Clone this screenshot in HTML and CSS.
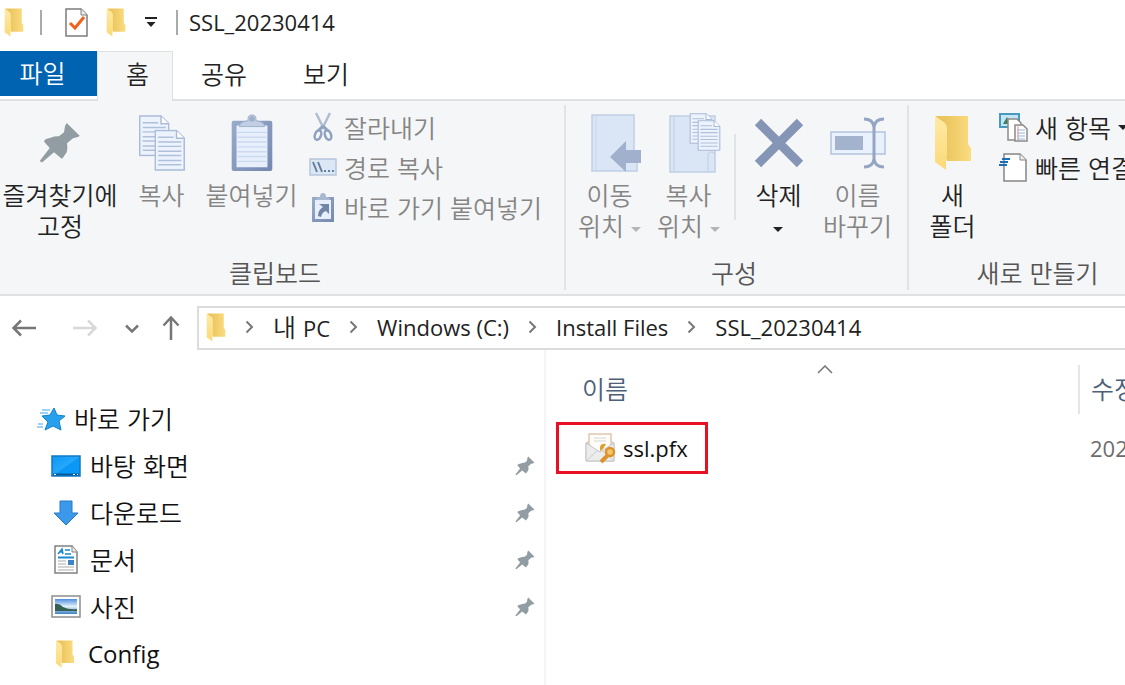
FILE: index.html
```html
<!DOCTYPE html>
<html lang="ko">
<head>
    <meta charset="UTF-8">
    <meta name="viewport" content="width=device-width, initial-scale=1.0">
    <title>SSL_20230414</title>
    <link rel="stylesheet" href="styles.css">
</head>
<body>

<!-- shared icons -->
<svg class="defs" aria-hidden="true">
    <defs>
        <linearGradient id="folderBack" x1="0" y1="0" x2="1" y2="0"><stop offset="0.2" stop-color="#eac45c"/><stop offset="1" stop-color="#fbdc80"/></linearGradient>
        <linearGradient id="folderFront" x1="0" y1="0" x2="0" y2="1"><stop offset="0" stop-color="#ffeaa6"/><stop offset="1" stop-color="#fbd976"/></linearGradient>
        <linearGradient id="board" x1="0" y1="0" x2="1" y2="1"><stop offset="0" stop-color="#9aaccb"/><stop offset="1" stop-color="#7488b0"/></linearGradient>
        <linearGradient id="desk" x1="0" y1="0" x2="1" y2="1"><stop offset="0" stop-color="#0a97f5"/><stop offset="0.5" stop-color="#25a8fb"/><stop offset="0.52" stop-color="#0a97f5"/><stop offset="1" stop-color="#0c9bf8"/></linearGradient>
        <linearGradient id="sky" x1="0" y1="0" x2="0" y2="1"><stop offset="0" stop-color="#4f8fe0"/><stop offset="0.5" stop-color="#e2f1fb"/><stop offset="1" stop-color="#3d7fc4"/></linearGradient>
    </defs>
    <symbol id="folder" viewBox="0 0 38 56">
        <path d="M2 1h32v28l3 4v13H13z" fill="url(#folderBack)"/>
        <path d="M1 1l10 7q2 2 2 5v28l-1 1v13L1 47z" fill="url(#folderFront)"/>
    </symbol>
    <symbol id="pin" viewBox="0 0 42 42">
        <path fill="#929da3" d="M27.7 1L40.7 13.7L39 15L34 16.3L28 21.3Q29 27 27.7 30.3L23 37L15 30.3L3 40.5L.7 39L10.7 26L5 19.5Q5 17 11.7 15.7Q16 14 20 14.3L25 10.3L26 4z"/>
    </symbol>
    <symbol id="chevron" viewBox="0 0 9 14"><path d="M1.5 1.5L7 7l-5.500 5.500" fill="none" stroke="#777" stroke-width="2"/></symbol>
    <symbol id="page" viewBox="0 0 32 43">
        <path d="M1 1h22l8 8v33H1z" fill="#edf3fc" stroke="#aabbd8" stroke-width="1.500"/>
        <path d="M23 1v8h8" fill="#fff" stroke="#aabbd8" stroke-width="1.500"/>
        <path d="M4 8h16M4 13h24M4 17.500h24M4 22.500h24M4 27h24M4 32h24M4 36.500h24" stroke="#b0c0dc" stroke-width="1.500"/>
    </symbol>
</svg>

<header class="titlebar">
    <svg class="ic-folder"><use href="#folder"/></svg>
    <span class="divider"></span>
    <button class="quick" aria-label="속성">
        <svg width="23" height="29" viewBox="0 0 23 29"><path d="M1 1h15l6 6v21H1z" fill="#fff" stroke="#7c7c7c" stroke-width="1.500"/><path d="M16 1v6h6" fill="#eee" stroke="#7c7c7c"/><path d="M5 15l5 5 9-11" fill="none" stroke="#f2601c" stroke-width="3"/></svg>
    </button>
    <button class="quick quick-folder" aria-label="새 폴더"><svg class="ic-folder"><use href="#folder"/></svg></button>
    <button class="quick quick-menu" aria-label="사용자 지정">
        <svg width="12" height="11" viewBox="0 0 12 11"><path d="M0 1h12" stroke="#222" stroke-width="2"/><path d="M1.500 5h9L6 10z" fill="#222"/></svg>
    </button>
    <span class="divider"></span>
    <h1 class="title latin">SSL_20230414</h1>
</header>

<nav class="tabs">
    <button class="tab file">파일</button>
    <button class="tab active">홈</button>
    <button class="tab">공유</button>
    <button class="tab">보기</button>
</nav>

<section class="ribbon">
    <div class="group clipboard">
        <div class="tools">
            <button class="big pin-btn">
                <span class="pic"><svg width="42" height="42"><use href="#pin"/></svg></span>
                <span>즐겨찾기에<br>고정</span>
            </button>
            <button class="big copy-btn" disabled>
                <span class="pic"><svg width="50" height="58" viewBox="0 0 50 60"><use href="#page" x="1" y="1" width="32" height="43"/><use href="#page" x="17" y="16" width="32" height="43"/></svg></span>
                <span>복사</span>
            </button>
            <button class="big paste-btn" disabled>
                <span class="pic"><svg width="42" height="58" viewBox="0 0 42 60"><rect x="0" y="7" width="42" height="52" rx="2" fill="url(#board)"/><path d="M5 12h32v43H5z" fill="#e6effb"/><path d="M6 19h30M6 24h30M6 29h30M6 34h30M6 39h30M6 44h30M6 49h30" stroke="#cbd9ee" stroke-width="1.500"/><path d="M8 13q0-5 9-6-1-6 4-6t4 6q9 1 9 6z" fill="#c1cee3" stroke="#9fb0cc"/><circle cx="21" cy="5" r="3" fill="#9fb0cc"/></svg></span>
                <span>붙여넣기</span>
            </button>
            <div class="stack">
                <button class="small" disabled>
                    <svg width="28" height="30" viewBox="0 0 28 30"><path d="M7 1l8 16M21 1L13 17" stroke="#b0bdd0" stroke-width="2.500"/><path d="M14 14l-5 5M14 14l5 5" stroke="#8fa1c0" stroke-width="3"/><ellipse cx="9" cy="23" rx="3" ry="5" transform="rotate(20 9 23)" fill="none" stroke="#8fa1c0" stroke-width="2.500"/><ellipse cx="19" cy="23" rx="3" ry="5" transform="rotate(-20 19 23)" fill="none" stroke="#8fa1c0" stroke-width="2.500"/></svg>
                    잘라내기
                </button>
                <button class="small" disabled>
                    <svg width="28" height="18" viewBox="0 0 28 18"><path d="M1 1h26v16H1z" fill="#dbe7f4" stroke="#b7c6dc" stroke-width="1.500"/><path d="M4 4l4 10M9 4l4 10" stroke="#64809e" stroke-width="2"/><path d="M15 13h2m2 0h2m2 0h2" stroke="#64809e" stroke-width="2"/></svg>
                    경로 복사
                </button>
                <button class="small" disabled>
                    <svg width="28" height="30" viewBox="0 0 28 30"><path d="M3 5h22v25H3z" fill="url(#board)"/><path d="M6 8h16v19H6z" fill="#e6effb"/><path d="M7 8q0-3 4-3 0-4 3-4t3 4q4 0 4 3z" fill="#a9b8d1"/><path d="M10 12h10v10l-3-3q-4 1-5 6l-3-1q0-6 5-9z" fill="#7185ab"/></svg>
                    바로 가기 붙여넣기
                </button>
            </div>
        </div>
        <div class="group-name">클립보드</div>
    </div>

    <div class="group organize">
        <div class="tools">
            <button class="big" disabled>
                <span class="pic"><svg width="62" height="60" viewBox="-12 0 62 60"><path d="M1 2h42v36l3 4v16H1z" fill="#dae5f5" stroke="#c0cfe5" stroke-width="1.500"/><path d="M5 2v56" stroke="#cbd8ec"/><path d="M19 44l16-16v9h16v13H35v9z" fill="#a1b0cc"/></svg></span>
                <span>이동<br>위치 <i class="drop"></i></span>
            </button>
            <button class="big" disabled>
                <span class="pic"><svg width="64" height="62" viewBox="-12 0 64 62"><path d="M1 4h45v56H1z" fill="#dae5f5" stroke="#c0cfe5" stroke-width="1.500"/><path d="M5 4v56M39 60V42q3-4 7 0" fill="none" stroke="#c0cfe5"/><use href="#page" x="20" y="1" width="24" height="31"/><use href="#page" x="28" y="8" width="24" height="31"/></svg></span>
                <span>복사<br>위치 <i class="drop"></i></span>
            </button>
            <span class="separator"></span>
            <button class="big enabled">
                <span class="pic"><svg width="50" height="50" viewBox="0 0 50 50"><path d="M4 4l42 42M46 4L4 46" stroke="#8495b5" stroke-width="9"/></svg></span>
                <span>삭제<br><i class="drop"></i></span>
            </button>
            <button class="big" disabled>
                <span class="pic"><svg width="58" height="52" viewBox="-1 0 56 52"><path d="M0 15h54v22H0z" fill="#e8f1fd" stroke="#b3c3dd" stroke-width="1.500"/><path d="M4 19h28v14H4z" fill="#a4b3cd"/><path d="M33 2q9 0 10 8v32q-1 8-10 8M53 2q-9 0-10 8M53 50q-9 0-10-8" fill="none" stroke="#95a6c4" stroke-width="3"/></svg></span>
                <span>이름<br>바꾸기</span>
            </button>
        </div>
        <div class="group-name">구성</div>
    </div>

    <div class="group create">
        <div class="tools">
            <button class="big">
                <span class="pic"><svg width="38" height="56"><use href="#folder"/></svg></span>
                <span>새<br>폴더</span>
            </button>
            <div class="stack">
                <button class="small">
                    <svg width="29" height="29" viewBox="0 0 29 29"><path d="M1 1h19v13H1z" fill="#c4e5f5" stroke="#4899bd" stroke-width="2"/><path d="M4 11l4-7 3 7z" fill="#397e60"/><path d="M9 6h9l4 4v17H9z" fill="#fff" stroke="#8a8a8a" stroke-width="1.500"/><path d="M16 12h8l4 4v12H16z" fill="#fff" stroke="#8a8a8a" stroke-width="1.500"/><path d="M18 17h8M18 20h8M18 23h8M18 26h8" stroke="#91b7df"/><path d="M19 13v14" stroke="#ed8c8c"/></svg>
                    새 항목 <i class="drop"></i>
                </button>
                <button class="small">
                    <svg width="29" height="29" viewBox="0 0 29 29"><path d="M5 1h16l6 6v21H5z" fill="#fff" stroke="#858585" stroke-width="1.500"/><path d="M21 1v6h6" fill="#eee" stroke="#858585"/><path d="M3 6h8M1 9h8M0 12h8" stroke="#1b6fb7" stroke-width="2"/></svg>
                    빠른 연결
                </button>
            </div>
        </div>
        <div class="group-name">새로 만들기</div>
    </div>
</section>

<div class="address-row">
    <div class="history">
        <button aria-label="뒤로"><svg width="24" height="18" viewBox="0 0 24 18"><path d="M24 9H2M9 1.500L1.500 9 9 16.500" fill="none" stroke="#777" stroke-width="2.500"/></svg></button>
        <button aria-label="앞으로" disabled><svg width="24" height="18" viewBox="0 0 24 18"><path d="M0 9h22M15 1.500L22.500 9 15 16.500" fill="none" stroke="#d8d8d8" stroke-width="2.500"/></svg></button>
        <button class="recent" aria-label="최근 위치"><svg width="14" height="9" viewBox="0 0 14 9"><path d="M1 1.500l6 6 6-6" fill="none" stroke="#777" stroke-width="2.500"/></svg></button>
        <button class="up" aria-label="위로"><svg width="18" height="24" viewBox="0 0 18 24"><path d="M9 24V2M1.500 9.500L9 1.500l7.500 8" fill="none" stroke="#777" stroke-width="2.500"/></svg></button>
    </div>
    <div class="path">
        <svg class="ic-folder"><use href="#folder"/></svg>
        <svg class="chev"><use href="#chevron"/></svg>
        <a href="#">내 <span class="latin">PC</span></a>
        <svg class="chev"><use href="#chevron"/></svg>
        <a href="#" class="latin">Windows (C:)</a>
        <svg class="chev"><use href="#chevron"/></svg>
        <a href="#" class="latin">Install Files</a>
        <svg class="chev"><use href="#chevron"/></svg>
        <a href="#" class="latin">SSL_20230414</a>
    </div>
</div>

<div class="content">
    <aside class="sidebar">
        <a href="#" class="item root">
            <svg width="28" height="24" viewBox="0 0 28 24"><path d="M17 1l3 7 8 1-6 5 2 9-8-4-8 4 3-8-6-6 8-1z" fill="#27a0ee" stroke="#1080cb"/><path d="M5 3h8M3 6h8M1 17h5M0 20h6" stroke="#80c5f4" stroke-width="1.500"/></svg>
            <span>바로 가기</span>
        </a>
        <a href="#" class="item">
            <svg width="30" height="22" viewBox="0 0 30 22"><path d="M1 1h28v20H1z" fill="url(#desk)" stroke="#1279c4" stroke-width="1.500"/><path d="M2 19.500h26" stroke="#075a9d" stroke-width="2"/><path d="M3 19.500h2M22 19.500h2m2 0h1" stroke="#fff"/></svg>
            <span>바탕 화면</span>
            <svg class="pin"><use href="#pin"/></svg>
        </a>
        <a href="#" class="item">
            <svg width="30" height="26" viewBox="0 0 30 26"><path d="M9 1h12v12h6L15 25 3 13h6z" fill="#3c98e8" stroke="#277bc9"/></svg>
            <span>다운로드</span>
            <svg class="pin"><use href="#pin"/></svg>
        </a>
        <a href="#" class="item">
            <svg width="30" height="29" viewBox="0 0 30 29"><path d="M4 1h17l5 6v21H4z" fill="#fff" stroke="#818181" stroke-width="1.500"/><path d="M21 1v6h5" fill="#eee" stroke="#818181"/><path d="M7 9l4-5 1 5M9 7h3M14 5h5M14 9h6" fill="none" stroke="#1889d4" stroke-width="1.500"/><path d="M7 12.500h16" stroke="#1889d4" stroke-width="2"/><path d="M7 16h8M7 19h8M7 22h16M7 25h16" stroke="#aaa"/><path d="M17 15h6v5h-6z" fill="#3e84c4"/></svg>
            <span>문서</span>
            <svg class="pin"><use href="#pin"/></svg>
        </a>
        <a href="#" class="item">
            <svg width="30" height="23" viewBox="0 0 30 23"><path d="M1 1h28v21H1z" fill="#fff" stroke="#8d8d8d" stroke-width="1.500"/><path d="M4 4h22v15H4z" fill="url(#sky)"/><path d="M4 9q4-1 8 3 6 3 14 2v2H4z" fill="#366052"/></svg>
            <span>사진</span>
            <svg class="pin"><use href="#pin"/></svg>
        </a>
        <a href="#" class="item">
            <svg class="side-folder"><use href="#folder"/></svg>
            <span class="latin">Config</span>
        </a>
    </aside>

    <main class="files">
        <table>
            <thead>
                <tr>
                    <th class="name">이름
                        <svg class="sort" viewBox="0 0 16 9"><path d="M1 8l7-7 7 7" fill="none" stroke="#777" stroke-width="1.500"/></svg>
                    </th>
                    <th>수정한 날짜</th>
                </tr>
            </thead>
            <tbody>
                <tr>
                    <td class="name">
                        <a href="#" class="file-link latin">
                            <svg width="31" height="32" viewBox="0 0 31 32"><path d="M1 11l3-2h22l3 2v18H1z" fill="#e3e3e3" stroke="#c4c4c4"/><path d="M4 2h22v14l-11 6-11-6z" fill="#fffdf9" stroke="#dfc7ae" stroke-width="1.500"/><path d="M9 6h12M9 9h12" stroke="#d6d6d6"/><path d="M1 11l14 9 14-9v18H1z" fill="#ececec" stroke="#c4c4c4"/><path d="M1 29l11-10M29 29L18 19" stroke="#cdcdcd"/><path d="M15 15q1-4 6-3l-3 5-3 2z" fill="#dda12b"/><path d="M24 22l-8 8" stroke="#db942d" stroke-width="4"/><circle cx="25" cy="20" r="4" fill="#f4c56d" stroke="#db942d" stroke-width="2.500"/></svg>
                            ssl.pfx
                        </a>
                    </td>
                    <td class="latin date">2023-04-14</td>
                </tr>
            </tbody>
        </table>
    </main>
</div>

</body>
</html>
```
FILE: styles.css
```css
* { box-sizing: border-box; }
body {
    margin: 0;
    min-height: 100vh;
    display: flex;
    flex-direction: column;
    overflow: hidden;
    background: #fff;
    color: #222;
    font: 25px/31px "Noto Sans CJK KR", sans-serif;
    font-weight: 350;
}
button { padding: 0; border: 0; background: none; font: inherit; color: inherit; white-space: nowrap; }
a { color: inherit; text-decoration: none; }
svg { display: block; flex: none; }
.defs { position: absolute; width: 0; height: 0; }
.latin { font-family: "Open Sans", "Noto Sans CJK KR", sans-serif; font-size: 22px; font-weight: 400; }
.ic-folder { width: 20px; height: 29px; }

/* title bar */
.titlebar { display: flex; align-items: center; height: 51px; padding: 0 0 6px 4px; }
.divider { width: 2px; height: 25px; background: #aaa; }
.titlebar .ic-folder + .divider { margin: 0 23px 0 16px; }
.quick-folder { margin-left: 18px; }
.quick-menu { margin: 0 19px 0 19px; }
.title { margin: 0 0 0 11px; }

/* tabs */
.tabs { display: flex; height: 50px; border-bottom: 2px solid #dfe1e3; }
.tab { height: 45px; padding: 0 28px; }
.tab.file { width: 97px; padding: 0 12px 2px 0; background: #0063b1; color: #fff; }
.tab.active { width: 76px; height: 50px; padding-bottom: 6px; background: #f5f6f7; border: 1px solid #dfe1e3; border-bottom: 0; }

/* ribbon */
.ribbon { display: flex; height: 195px; background: #f5f6f7; border-bottom: 2px solid #dfe1e3; }
.group { display: flex; flex-direction: column; flex: none; margin: 4px 0; padding-top: 2px; border-right: 2px solid #e2e3e5; }
.clipboard { width: 566px; }
.clipboard .group-name { padding-right: 14px; }
.organize { width: 343px; }
.organize .group-name { padding-right: 5px; }
.create { width: 257px; border-right: 0; }
.tools { display: flex; flex: 1; }
.organize .tools, .create .tools { padding-left: 4px; }
.group-name { color: #555; text-align: center; padding-bottom: 2px; }
.big { display: flex; flex-direction: column; align-items: center; width: 79px; }
.big:disabled, .small:disabled { color: #858585; }
.pic { display: flex; align-items: center; justify-content: center; height: 72px; }
.pin-btn { width: 120px; }
.copy-btn { width: 83px; }
.paste-btn { width: 97px; }
.stack { padding-left: 9px; }
.small { display: flex; align-items: center; gap: 7px; height: 40px; }
.create .stack { padding-left: 7px; }
.drop { display: inline-block; vertical-align: middle; border: 5px solid transparent; border-top-color: #222; border-bottom: 0; }
.big:disabled .drop { border-top-color: #b5b5b5; }
.separator { width: 2px; height: 86px; margin: 27px 3px 0 6px; background: #e2e3e5; }

/* address bar */
.address-row { display: flex; align-items: center; padding-top: 10px; }
.history { display: flex; align-items: center; width: 197px; padding-left: 12px; }
.history button + button { margin-left: 37px; }
.history button.recent { margin-left: 28px; }
.history button.up { margin-left: 23px; }
.path { display: flex; align-items: center; flex: 1; gap: 19px; height: 44px; padding: 0 7px 2px; border: 2px solid #dcdcdc; border-right: 0; white-space: nowrap; }
.chev { width: 9px; height: 14px; }

/* content */
.content { display: flex; flex: 1; }
.sidebar { width: 546px; padding-top: 45px; border-right: 2px solid #f5f5f5; flex: none; }
.item { display: flex; align-items: center; gap: 9px; height: 47px; padding: 0 9px 0 51px; color: #111; }
.item.root { padding-left: 37px; }
.item .latin { font-size: 24px; }
.item .pin { width: 20px; height: 20px; margin-left: auto; }
.side-folder { width: 28px; height: 28px; }

.files { flex: 1; min-width: 0; overflow: hidden; padding-top: 15px; }
table { border-collapse: collapse; table-layout: fixed; width: 800px; }
th, td { padding: 0 0 0 11px; text-align: left; font-weight: 350; white-space: nowrap; }
th { height: 49px; padding-bottom: 2px; color: #4c607a; }
th.name { position: relative; width: 533px; padding-left: 36px; border-right: 2px solid #e5e5e5; }
.sort { position: absolute; left: 271px; top: 0; width: 16px; height: 9px; }
td { padding-top: 8px; }
td.name { padding-left: 10px; }
.date { color: #6d6d6d; }
.file-link { display: inline-flex; align-items: center; gap: 7px; height: 52px; padding: 0 17px 0 26px; border: 3px solid #e81123; color: #111; }
```
